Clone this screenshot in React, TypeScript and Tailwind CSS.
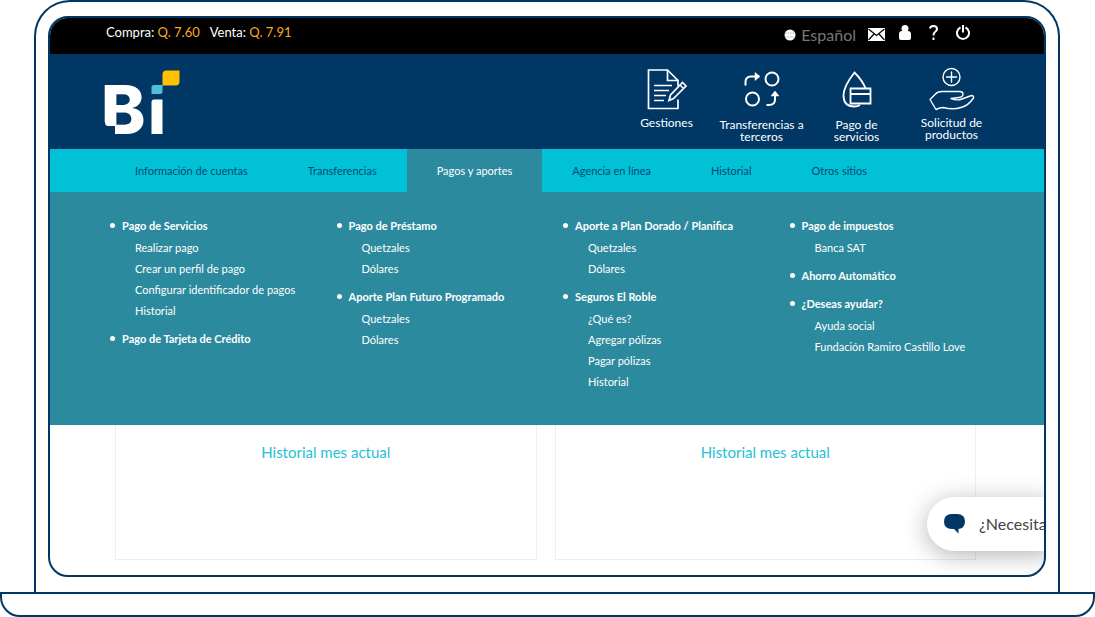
import React from 'react'

const tabs = [
  'Información de cuentas',
  'Transferencias',
  'Pagos y aportes',
  'Agencia en línea',
  'Historial',
  'Otros sitios',
]

const menu = [
  [
    {
      title: 'Pago de Servicios',
      items: ['Realizar pago', 'Crear un perfil de pago', 'Configurar identificador de pagos', 'Historial'],
    },
    { title: 'Pago de Tarjeta de Crédito', items: [] },
  ],
  [
    { title: 'Pago de Préstamo', items: ['Quetzales', 'Dólares'] },
    { title: 'Aporte Plan Futuro Programado', items: ['Quetzales', 'Dólares'] },
  ],
  [
    { title: 'Aporte a Plan Dorado / Planifica', items: ['Quetzales', 'Dólares'] },
    { title: 'Seguros El Roble', items: ['¿Qué es?', 'Agregar pólizas', 'Pagar pólizas', 'Historial'] },
  ],
  [
    { title: 'Pago de impuestos', items: ['Banca SAT'] },
    { title: 'Ahorro Automático', items: [] },
    { title: '¿Deseas ayudar?', items: ['Ayuda social', 'Fundación Ramiro Castillo Love'] },
  ],
]

const Logo = () => (
  <svg className="overflow-visible" width="75" height="65" viewBox="0 0 75 65" role="img" aria-label="Bi">
    <text x="-4" y="64" fill="#fff" fontFamily="Inter, sans-serif" fontWeight="800" fontSize="67">B</text>
    {/* notch under the stem */}
    <path d="M-1 52v13h11v-9H3q-3 0-3-4z" fill="#003764" />
    <path d="M49 29.500h8.500V64h-11V32q0-2.500 2.500-2.500z" fill="#fff" />
    <path d="M49 15h8.500v6.500q0 2.500-2.500 2.500h-8.500v-6.500q0-2.500 2.500-2.500z" fill="#4fc0d8" />
    <path d="M61.500 0.500H74.500V11.500q0 4-4 4H57.500V4.500q0-4 4-4z" fill="#ffc100" />
  </svg>
)

const DocumentIcon = () => (
  <svg width="40" height="42" viewBox="0 0 40 42" fill="none" stroke="#fff" strokeWidth="1.700">
    <path d="M31 11.500 20.500 1H1.500v38.500H31v-9" />
    <path d="M20.500 1v10.500H31V17" />
    <path d="M7 16.500h18M7 21.500h15M7 26.500h12M7 31.500h10" />
    <path d="M22 31.500l1.500-5.500L35.500 13.500l3.500 3.500-12.500 12.500zM33 16l3.500 3.500" />
  </svg>
)

const TransferIcon = () => (
  <svg width="36" height="36" viewBox="0 0 36 36" fill="none" stroke="#fff" strokeWidth="2">
    <path d="M1.500 14.500V11q0-5.500 5.500-5.500h8" />
    <path d="M11 1.500v8l5-4z" fill="#fff" strokeWidth="0.500" />
    <circle cx="28" cy="8" r="6.500" />
    <circle cx="8.500" cy="28" r="6.500" />
    <path d="M22.500 34H25q6 0 6-5.500V24" />
    <path d="M27 25h8L31 20z" fill="#fff" strokeWidth="0.500" />
  </svg>
)

const DropIcon = () => (
  <svg width="30" height="38" viewBox="0 0 30 38" fill="none" stroke="#fff" strokeWidth="1.800">
    <path d="M23.500 17Q20 9 12.500 1.500 1.500 15.500 1.500 24.500 1.500 35.500 12.500 35.500 15.500 35.500 18 34" />
    <path d="M8.500 17.500h20v15h-20zM8.500 23h20" />
  </svg>
)

const HandIcon = () => (
  <svg width="46" height="44" viewBox="0 0 46 44" fill="none" stroke="#fff" strokeWidth="1.400" strokeLinejoin="round" strokeLinecap="round">
    <circle cx="22.500" cy="10" r="8.500" />
    <path d="M22.500 5v10M17.500 10h10" />
    <path d="M1 32.500 6.500 27Q8.500 24.500 13 24.500H30.500Q34 24.500 34 27 34 30 30 30.500L22 31.500Q28 34 33 32L42.500 28.500Q45 28.500 44.500 31 39 39 32 40.500 24 43 14 40.500 11 40.500 7 42.500z" />
  </svg>
)

const Action = ({ icon, label, className }: { icon: React.ReactNode; label: string; className: string }) => (
  <a href="#" className={`flex flex-col items-center text-center text-[12px] leading-3 ${className}`}>
    {icon}
    <span className="px-1">{label}</span>
  </a>
)

const App = () => {
  return (
    <div className="bg-white font-[Lato,sans-serif] text-white">
      {/* ---------------Laptop lid---------------- */}
      <div className="mr-[35px] ml-[34px] rounded-t-[36px] border-2 border-b-0 border-[#003764] px-3 pt-[14px] pb-[15px]">
        <div className="relative overflow-hidden rounded-[20px] border-2 border-[#003764] bg-white">
          {/* ---------------Top bar---------------- */}
          <div className="flex h-9 justify-between bg-black pr-[74px] pl-14">
            <p className="flex gap-[10px] pt-1 text-[13px] leading-5">
              <span>Compra: <span className="text-[#fba919]">Q. 7.60</span></span>
              <span>Venta: <span className="text-[#fba919]">Q. 7.91</span></span>
            </p>
            <div className="flex h-7 items-center">
              <button className="flex items-center gap-[5px] pt-[5px] text-[16px] text-[#777]">
                <svg width="12" height="12" viewBox="0 0 12 12">
                  <circle cx="6" cy="6" r="5.500" fill="#fff" />
                  <path d="M1 4h10M1 8h10" stroke="#aaa" strokeDasharray="1.500 1" />
                </svg>
                Español
              </button>
              <button aria-label="Mensajes" className="ml-3 pt-1">
                <svg width="17" height="13" viewBox="0 0 17 13">
                  <rect width="17" height="13" fill="#fff" />
                  <path d="M0.500 1l8 6.500 8-6.500M0.500 12l5.500-6M16.500 12L11 6" fill="none" stroke="#000" strokeWidth="1.200" />
                </svg>
              </button>
              <button aria-label="Perfil" className="ml-[14px]">
                <svg width="12" height="15" viewBox="0 0 12 15" fill="#fff">
                  <circle cx="6" cy="3.500" r="3.500" />
                  <path d="M0 9q0-3 3-3h6q3 0 3 3v4q0 2-2 2H2q-2 0-2-2z" />
                </svg>
              </button>
              <button aria-label="Ayuda" className="ml-[18px]">
                <svg width="9" height="15" viewBox="0 0 9 15" fill="none" stroke="#fff" strokeWidth="2">
                  <path d="M1 3.500Q1.500 1 4.500 1 8 1 8 4 8 5.500 6 7 4.500 8 4.500 10.500M4.500 12.500v2.500" />
                </svg>
              </button>
              <button aria-label="Salir" className="ml-[18px]">
                <svg width="14" height="15" viewBox="0 0 14 15" fill="none" stroke="#fff" strokeWidth="2">
                  <path d="M4.500 2.500a6 6 0 1 0 5 0M7 0v7.500" />
                </svg>
              </button>
            </div>
          </div>
          {/* ---------------Header---------------- */}
          <header className="flex h-[95px] justify-between bg-[#003764] pr-[45px] pl-[55px]">
            <a href="#" className="pt-4">
              <Logo />
            </a>
            <div className="grid w-[380px] grid-cols-4">
              <Action className="gap-[6px] pt-[15px]" icon={<DocumentIcon />} label="Gestiones" />
              <Action className="gap-3 pt-[17px]" icon={<TransferIcon />} label="Transferencias a terceros" />
              <Action className="gap-[10px] pt-[17px]" icon={<DropIcon />} label="Pago de servicios" />
              <Action className="gap-[6px] pt-[13px]" icon={<HandIcon />} label="Solicitud de productos" />
            </div>
          </header>
          {/* ---------------Tabs---------------- */}
          <nav className="flex h-[43px] bg-[#00c1d6] pl-[55px] text-[11px]">
            {tabs.map((tab) => (
              <a
                key={tab}
                href="#"
                className={`flex items-center px-[30px] pt-px whitespace-nowrap ${
                  tab === 'Pagos y aportes' ? 'bg-[#2c8a9e] text-white' : 'text-[#004a76]'
                }`}
              >
                {tab}
              </a>
            ))}
          </nav>
          {/* ---------------Open menu---------------- */}
          <div className="grid h-[233px] grid-cols-4 bg-[#2c8a9e] pt-[23px] pr-8 pl-14 text-[11px] leading-[21px]">
            {menu.map((column, i) => (
              <div key={i} className="flex flex-col gap-[7px]">
                {column.map((group) => (
                  <div key={group.title}>
                    <a href="#" className="flex items-center gap-[7px] pl-1 font-bold whitespace-nowrap">
                      <span className="size-[5px] rounded-full bg-white" />
                      {group.title}
                    </a>
                    {group.items.length > 0 && (
                      <ul className="pt-px pl-[29px] whitespace-nowrap">
                        {group.items.map((item) => (
                          <li key={item}>
                            <a href="#">{item}</a>
                          </li>
                        ))}
                      </ul>
                    )}
                  </div>
                ))}
              </div>
            ))}
          </div>
          {/* ---------------Cards---------------- */}
          <div className="grid h-[150px] grid-cols-2 gap-[18px] pr-[68px] pb-[15px] pl-[65px]">
            <div className="border border-t-0 border-[#eee] pt-4 text-center text-[15px] text-[#26bfd3]">
              Historial mes actual
            </div>
            <div className="border border-t-0 border-[#eee] pt-4 text-center text-[15px] text-[#26bfd3]">
              Historial mes actual
            </div>
          </div>
          {/* ---------------Chat bubble---------------- */}
          <button className="absolute -right-2 bottom-6 flex h-[54px] w-[125px] items-center gap-[14px] rounded-l-full bg-white pl-[17px] text-[16px] whitespace-nowrap text-[#444] shadow-[0_4px_24px_rgba(0,0,0,0.3)]">
            <svg className="shrink-0" width="21" height="20" viewBox="0 0 21 20" fill="#003764">
              <path d="M8 0h5q8 0 8 7.500 0 6.500-6.500 7.500L14.500 19.500 10 15H8Q0 15 0 7.500 0 0 8 0z" />
            </svg>
            ¿Necesita
          </button>
        </div>
      </div>
      {/* ---------------Laptop base---------------- */}
      <div className="h-[25px] rounded-b-[20px] border-2 border-[#003764]" />
    </div>
  )
}

export default App
